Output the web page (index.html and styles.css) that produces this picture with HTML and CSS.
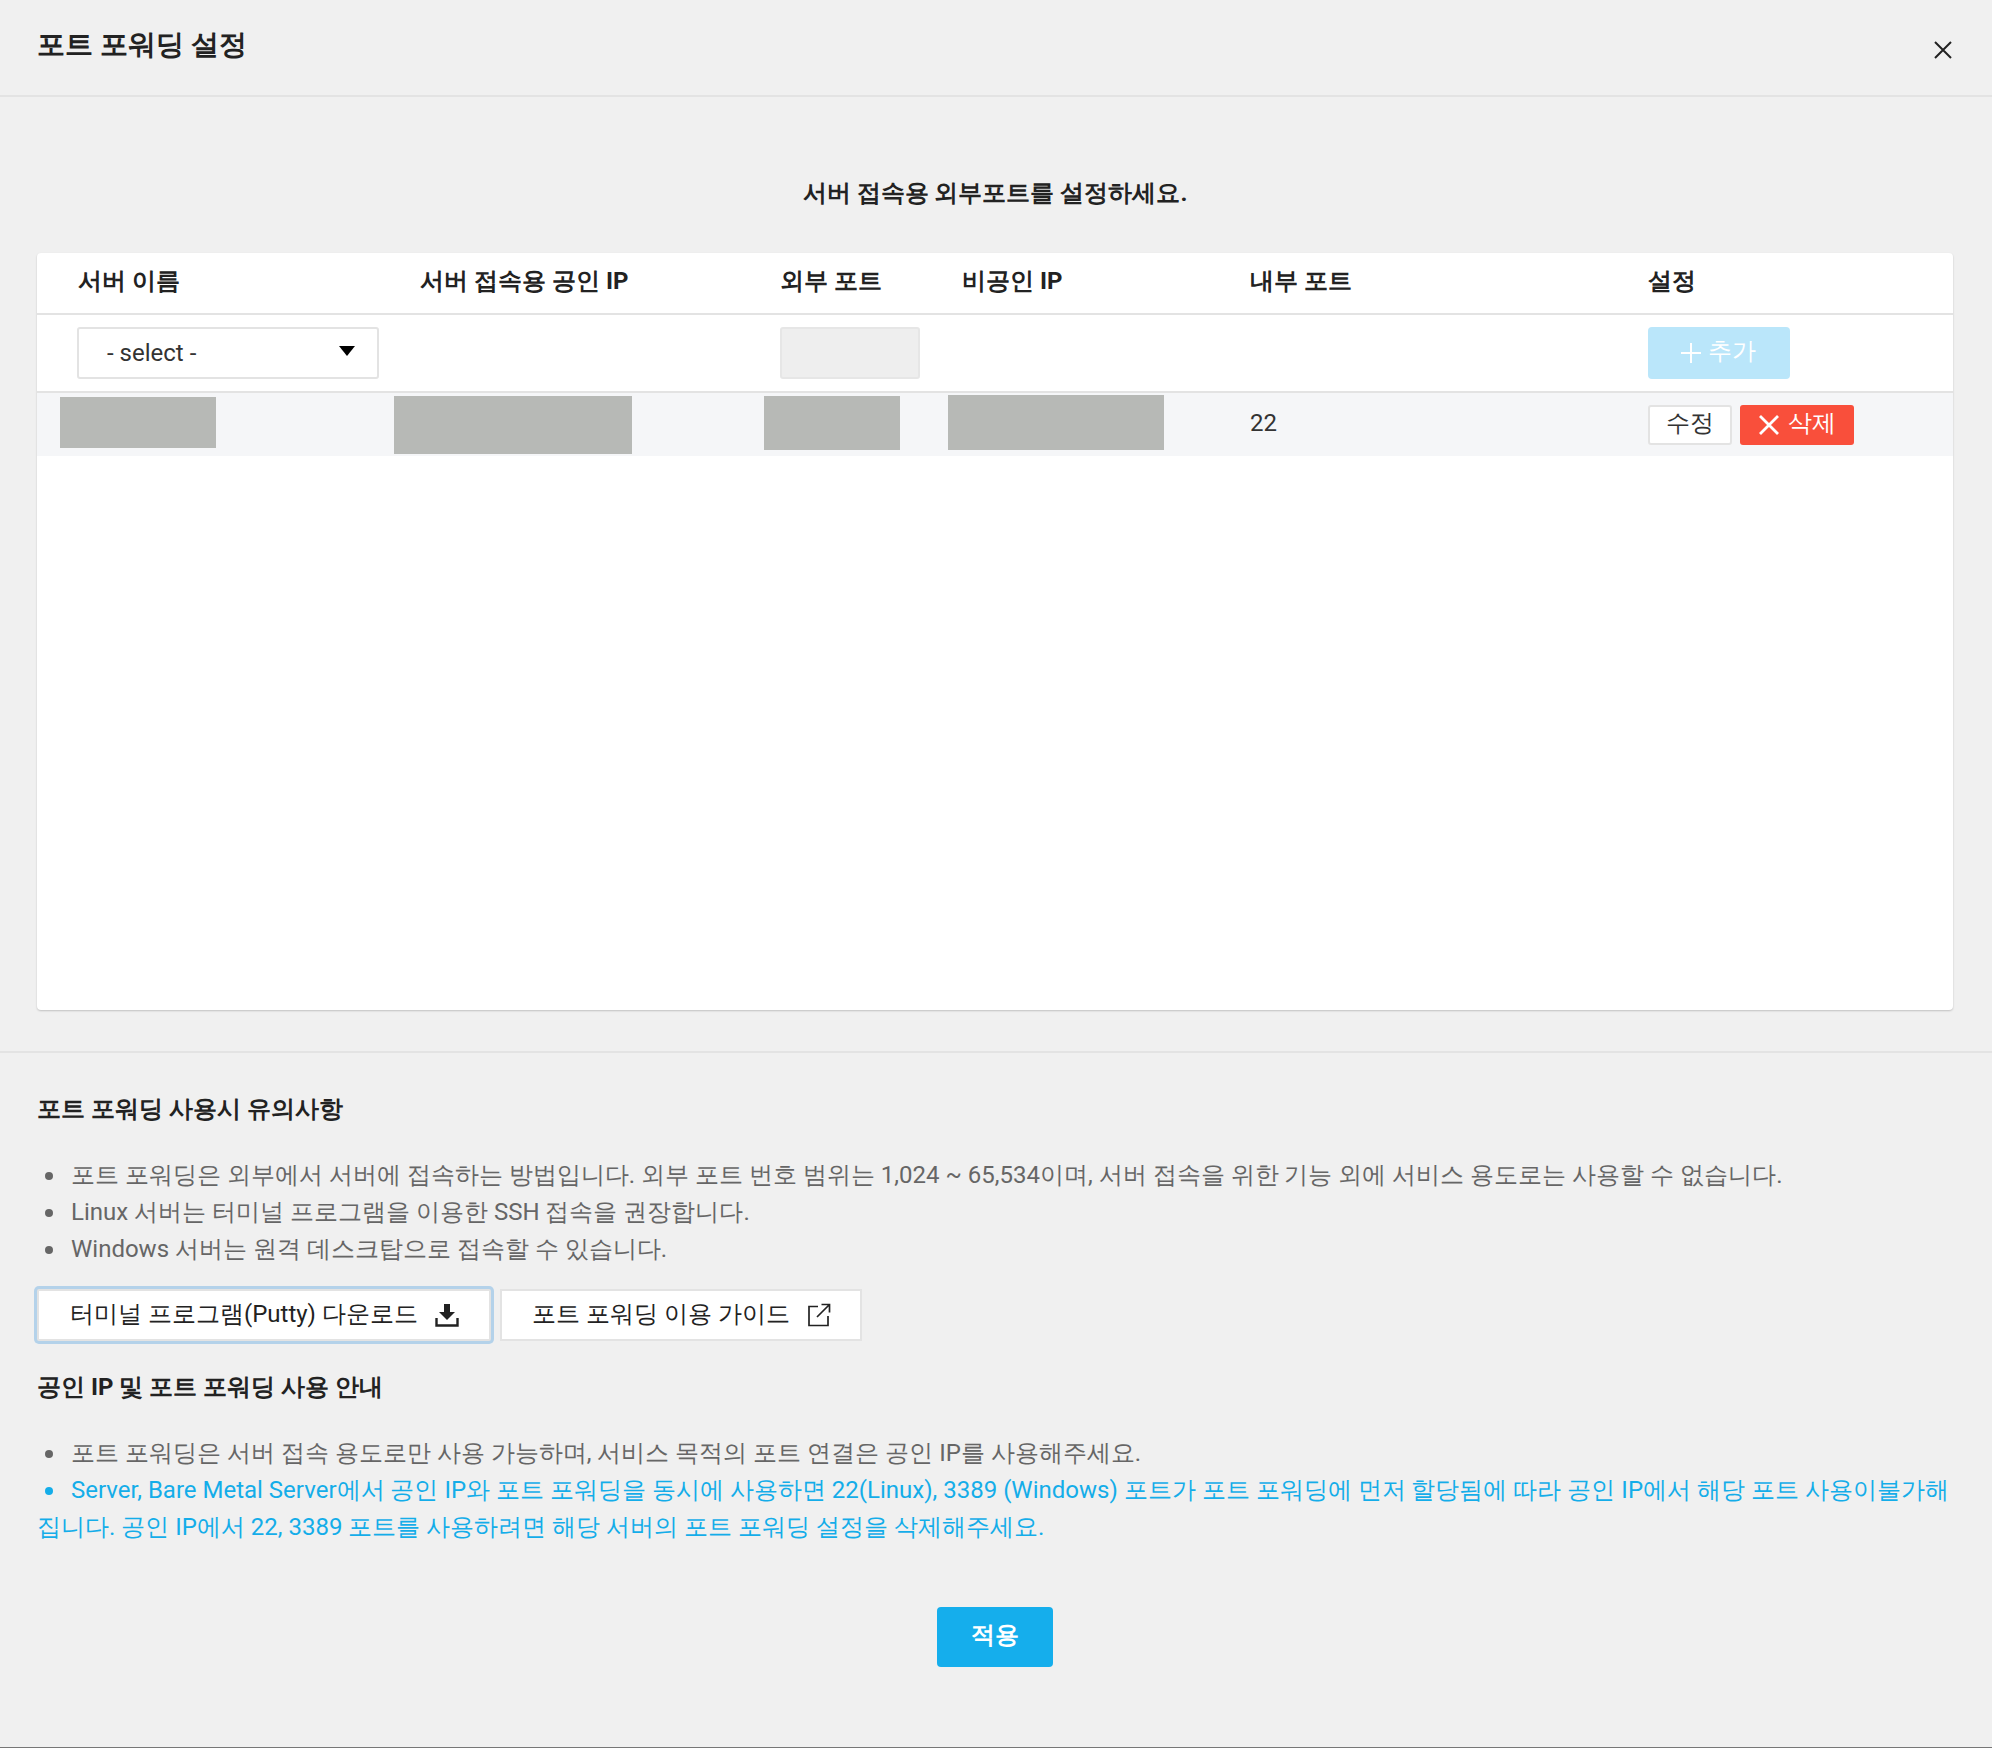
FILE: index.html
```html
<!DOCTYPE html>
<html>
<head>
<meta charset="utf-8">
<title>포트 포워딩 설정</title>
<link rel="stylesheet" href="styles.css">
</head>
<body>
<div class="modal">
  <header class="modal-head">
    <h1 class="modal-title">포트 포워딩 설정</h1>
    <button class="close" aria-label="닫기">
      <svg width="18" height="18" viewBox="0 0 18 18"><path d="M1 1L17 17M17 1L1 17" stroke="#222" stroke-width="2" fill="none"/></svg>
    </button>
  </header>
  <section class="main">
    <p class="lead">서버 접속용 외부포트를 설정하세요.</p>
    <div class="table">
      <div class="row row-head">
        <div class="cell">서버 이름</div>
        <div class="cell">서버 접속용 공인 IP</div>
        <div class="cell">외부 포트</div>
        <div class="cell">비공인 IP</div>
        <div class="cell">내부 포트</div>
        <div class="cell">설정</div>
      </div>
      <div class="row row-form">
        <div class="cell"><div class="select">- select -</div></div>
        <div class="cell"></div>
        <div class="cell"><div class="input"></div></div>
        <div class="cell"></div>
        <div class="cell"></div>
        <div class="cell">
          <button class="btn-add"><svg width="22" height="22" viewBox="0 0 22 22"><path d="M11 1V21M1 11H21" stroke="#fff" stroke-width="2" fill="none"/></svg>추가</button>
        </div>
      </div>
      <div class="row row-data">
        <div class="cell"><span class="mask mask-a"></span></div>
        <div class="cell"><span class="mask mask-b"></span></div>
        <div class="cell"><span class="mask mask-c"></span></div>
        <div class="cell"><span class="mask mask-d"></span></div>
        <div class="cell">22</div>
        <div class="cell actions">
          <button class="btn-edit">수정</button>
          <button class="btn-del"><svg width="20" height="20" viewBox="0 0 20 20"><path d="M1 1L19 19M19 1L1 19" stroke="#fff" stroke-width="2.800" fill="none"/></svg>삭제</button>
        </div>
      </div>
    </div>
  </section>
  <section class="notes">
    <h2 class="notes-title">포트 포워딩 사용시 유의사항</h2>
    <ul class="list">
      <li>포트 포워딩은 외부에서 서버에 접속하는 방법입니다. 외부 포트 번호 범위는 1,024 ~ 65,534이며, 서버 접속을 위한 기능 외에 서비스 용도로는 사용할 수 없습니다.</li>
      <li>Linux 서버는 터미널 프로그램을 이용한 SSH 접속을 권장합니다.</li>
      <li>Windows 서버는 원격 데스크탑으로 접속할 수 있습니다.</li>
    </ul>
    <div class="links">
      <a class="link-btn focused">터미널 프로그램(Putty) 다운로드
        <svg width="24" height="24" viewBox="0 0 24 24"><path d="M9 1H15V9H20L12 17L4 9H9Z" fill="#222"/><path d="M1.500 15V22.500H22.500V15" stroke="#222" stroke-width="2.400" fill="none"/></svg>
      </a>
      <a class="link-btn">포트 포워딩 이용 가이드
        <svg width="24" height="24" viewBox="0 0 24 24"><path d="M11 3.500H2V22.500H21V13" stroke="#222" stroke-width="1.700" fill="none"/><path d="M10 14L22 2M14.500 1.500H22.500V9.500" stroke="#222" stroke-width="1.700" fill="none"/></svg>
      </a>
    </div>
    <h2 class="notes-title second">공인 IP 및 포트 포워딩 사용 안내</h2>
    <ul class="list">
      <li>포트 포워딩은 서버 접속 용도로만 사용 가능하며, 서비스 목적의 포트 연결은 공인 IP를 사용해주세요.</li>
      <li class="accent">Server, Bare Metal Server에서 공인 IP와 포트 포워딩을 동시에 사용하면 22(Linux), 3389 (Windows) 포트가 포트 포워딩에 먼저 할당됨에 따라 공인 IP에서 해당 포트 사용이불가해집니다. 공인 IP에서 22, 3389 포트를 사용하려면 해당 서버의 포트 포워딩 설정을 삭제해주세요.</li>
    </ul>
    <div class="submit-wrap"><button class="submit">적용</button></div>
  </section>
</div>
</body>
</html>
```

FILE: styles.css
```css
* { box-sizing: border-box; }
html, body { margin: 0; padding: 0; }
body {
  background: #f0f0f0;
  color: #222;
  font-family: Roboto, sans-serif;
  font-size: 24px;
}
button { font-family: inherit; font-size: 24px; cursor: pointer; }
.modal {
  height: 1748px;
  border-bottom: 1px solid #777;
  display: flex;
  flex-direction: column;
}
.modal-head {
  height: 97px;
  flex: none;
  border-bottom: 2px solid #e3e3e3;
  padding: 26px 39px 0 37px;
  display: flex;
  justify-content: space-between;
  align-items: flex-start;
}
.modal-title { margin: 0; font-size: 28px; line-height: 38px; font-weight: 700; color: #222; }
.close { border: 0; background: none; padding: 0; width: 19px; height: 18px; margin-top: 15px; display: block; }
.close svg { display: block; }
.main { flex: none; height: 956px; border-bottom: 2px solid #e3e3e3; padding: 0 39px 0 37px; }
.lead { margin: 0; padding-top: 78px; height: 156px; line-height: 36px; text-align: center; font-weight: 700; color: #222; }
.table {
  height: 757px;
  background: #fff;
  border-radius: 4px;
  box-shadow: 0 1px 2px rgba(0,0,0,.2);
}
.row { display: grid; grid-template-columns: 383px 360px 182px 288px 398px 305px; align-items: center; }
.row-head { height: 62px; border-bottom: 2px solid #e3e3e3; font-weight: 700; color: #222; padding-bottom: 5px; }
.row-head .cell:first-child { padding-left: 41px; }
.row-form .cell:first-child { padding-left: 40px; }
.row-form { height: 78px; border-bottom: 2px solid #e3e3e3; }
.row-data { height: 63px; background: #f5f6f8; }
.select {
  position: relative;
  width: 302px; height: 52px;
  border: 2px solid #e3e3e3;
  border-radius: 3px;
  background: #fff;
  padding-left: 28px;
  line-height: 48px;
  color: #333;
}
.select::after {
  content: "";
  position: absolute;
  left: 260px; top: 17px;
  border-left: 8px solid transparent;
  border-right: 8px solid transparent;
  border-top: 10px solid #000;
}
.input { width: 140px; height: 52px; background: #eee; border: 2px solid #e6e6e6; border-radius: 3px; }
.btn-add {
  width: 142px; height: 52px; border: 0; border-radius: 4px;
  background: #bae6fa; color: #fff;
  display: flex; align-items: center; justify-content: center; gap: 6px;
  padding: 0 2px 4px 0;
}
.btn-add svg { margin-top: 4px; }
.row-data .cell { position: relative; height: 100%; display: flex; align-items: center; color: #333; padding-bottom: 3px; }
.mask { position: absolute; background: #b7b9b6; display: block; }
.mask-a { left: 23px; top: 4px; width: 156px; height: 51px; }
.mask-b { left: -26px; top: 3px; width: 238px; height: 58px; }
.mask-c { left: -16px; top: 3px; width: 136px; height: 54px; }
.mask-d { left: -14px; top: 2px; width: 216px; height: 55px; }
.row-data .actions { gap: 8px; padding-bottom: 0; }
.btn-edit {
  width: 84px; height: 40px; background: #fff; border: 2px solid #e3e3e3; border-radius: 3px; color: #333; padding: 0 0 4px;
}
.btn-del {
  width: 114px; height: 40px; background: #f94f3b; border: 0; border-radius: 3px; color: #fff;
  display: flex; align-items: center; justify-content: center; gap: 9px; padding: 0 0 4px;
}
.btn-del svg { margin-top: 4px; }
.notes { flex: 1; padding: 0 39px 0 37px; }
.notes-title { margin: 0; padding-top: 38px; height: 104px; line-height: 36px; font-size: 24px; font-weight: 700; color: #222; }
.notes-title.second { padding-top: 28px; height: 94px; }
.list { margin: 0; padding: 0; list-style: none; color: #666; line-height: 37px; word-break: break-all; }
.list li::before {
  content: "";
  display: inline-block;
  width: 8px; height: 8px;
  border-radius: 50%;
  background: currentColor;
  margin: 0 18px 3px 8px;
}
.list .accent { color: #14ade9; }
.links { display: flex; gap: 9px; margin-top: 21px; }
.link-btn {
  height: 52px; background: #fff; border: 2px solid #e3e3e3;
  display: flex; align-items: center; gap: 17px; color: #222;
  padding: 0 30px 2px 30px; white-space: nowrap; flex: none;
}
.link-btn svg { flex: none; margin-top: 2px; }
.link-btn.focused { box-shadow: 0 0 0 3px #b4d2ea; width: 454px; border-radius: 2px; padding-left: 31px; }
.link-btn:not(.focused) { width: 362px; }
.submit-wrap { display: flex; justify-content: center; padding-top: 61px; }
.submit { width: 116px; height: 60px; border: 0; border-radius: 4px; background: #15aeec; color: #fff; font-weight: 700; padding: 0 0 4px; }
```
